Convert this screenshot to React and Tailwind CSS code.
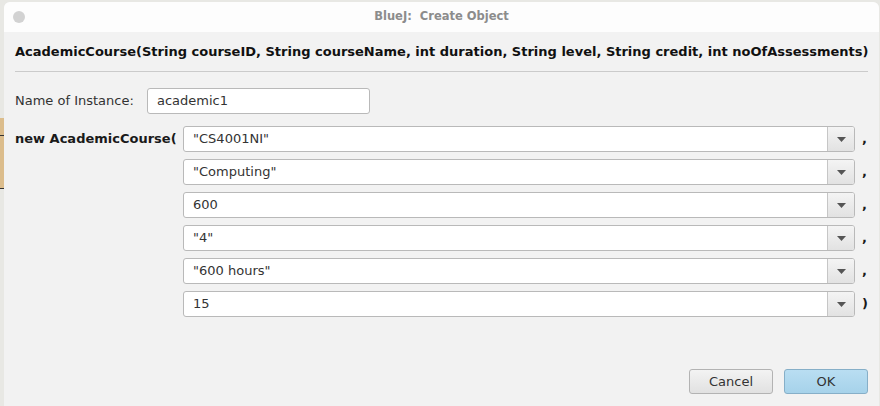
import React from 'react';

const params = ['"CS4001NI"', '"Computing"', '600', '"4"', '"600 hours"', '15'];

function Combo({ value, last }) {
    return (
        <div className="flex items-center">
            <div className="flex w-[672px] h-[26px] rounded-[3px] border border-[#b9b9b9] bg-white overflow-hidden">
                <div className="flex-1 flex items-center pl-[9px] text-[13px] text-[#333]">{value}</div>
                <div className="w-[27px] flex items-center justify-center border-l border-[#c6c6c6] bg-gradient-to-b from-[#f4f4f4] to-[#e2e2e2]">
                    <svg width="9" height="5" viewBox="0 0 9 5"><path d="M0 0H9L4.5 5Z" fill="#555" /></svg>
                </div>
            </div>
            <span className="ml-[7px] text-[13px] font-bold text-[#1a1a1a]">{last ? ')' : ','}</span>
        </div>
    );
}

export default function App() {
    return (
        <div className="flex w-[880px] h-[406px] bg-[#e8e8e4] overflow-hidden" style={{ fontFamily: '"DejaVu Sans", sans-serif' }}>
            <div className="w-[4px] flex flex-col shrink-0">
                <div className="h-[118px]" />
                <div className="h-[17px] bg-[#dcbd8c]" />
                <div className="h-[54px] bg-[#dcbd8c] border-y border-[#333]" />
            </div>
            <div className="mt-[2px] w-[875px] flex flex-col bg-[#f2f2f2] rounded-t-[6px] overflow-hidden">
                <div className="h-[30px] bg-[#fdfdfd] flex items-center relative">
                    <div className="ml-[9px] w-[12px] h-[12px] rounded-full bg-[#d2d2d2]" />
                    <div className="absolute inset-0 flex items-center justify-center text-[11.5px] font-bold text-[#8c8c8c]">BlueJ:&nbsp; Create Object</div>
                </div>
                <div className="mx-[11px] h-[40px] flex items-center border-b border-[#cbcbcb] text-[13px] font-bold text-[#111] whitespace-nowrap">
                    AcademicCourse(String courseID, String courseName, int duration, String level, String credit, int noOfAssessments)
                </div>
                <div className="mx-[11px] mt-[16px] flex items-center">
                    <div className="w-[132px] text-[13px] text-[#333]">Name of Instance:</div>
                    <div className="w-[223px] h-[26px] rounded-[3px] border border-[#b9b9b9] bg-white flex items-center pl-[9px] text-[13px] text-[#333]">academic1</div>
                </div>
                <div className="mx-[11px] mt-[12px] flex">
                    <div className="w-[169px] h-[26px] flex items-center text-[13px] font-bold text-[#1a1a1a]">new AcademicCourse(</div>
                    <div className="flex flex-col gap-[7px]">
                        {params.map((p, i) => <Combo key={i} value={p} last={i === params.length - 1} />)}
                    </div>
                </div>
                <div className="mt-auto mb-[12px] mr-[11px] flex justify-end gap-[11px]">
                    <button className="w-[84px] h-[25px] rounded-[3px] border border-[#b3b3b3] bg-gradient-to-b from-[#f3f3f3] to-[#e1e1e1] text-[13px] text-[#333]">Cancel</button>
                    <button className="w-[84px] h-[25px] rounded-[3px] border border-[#86afc8] bg-gradient-to-b from-[#b9def2] to-[#a6d2ea] text-[13px] text-[#333]">OK</button>
                </div>
            </div>
        </div>
    );
}
